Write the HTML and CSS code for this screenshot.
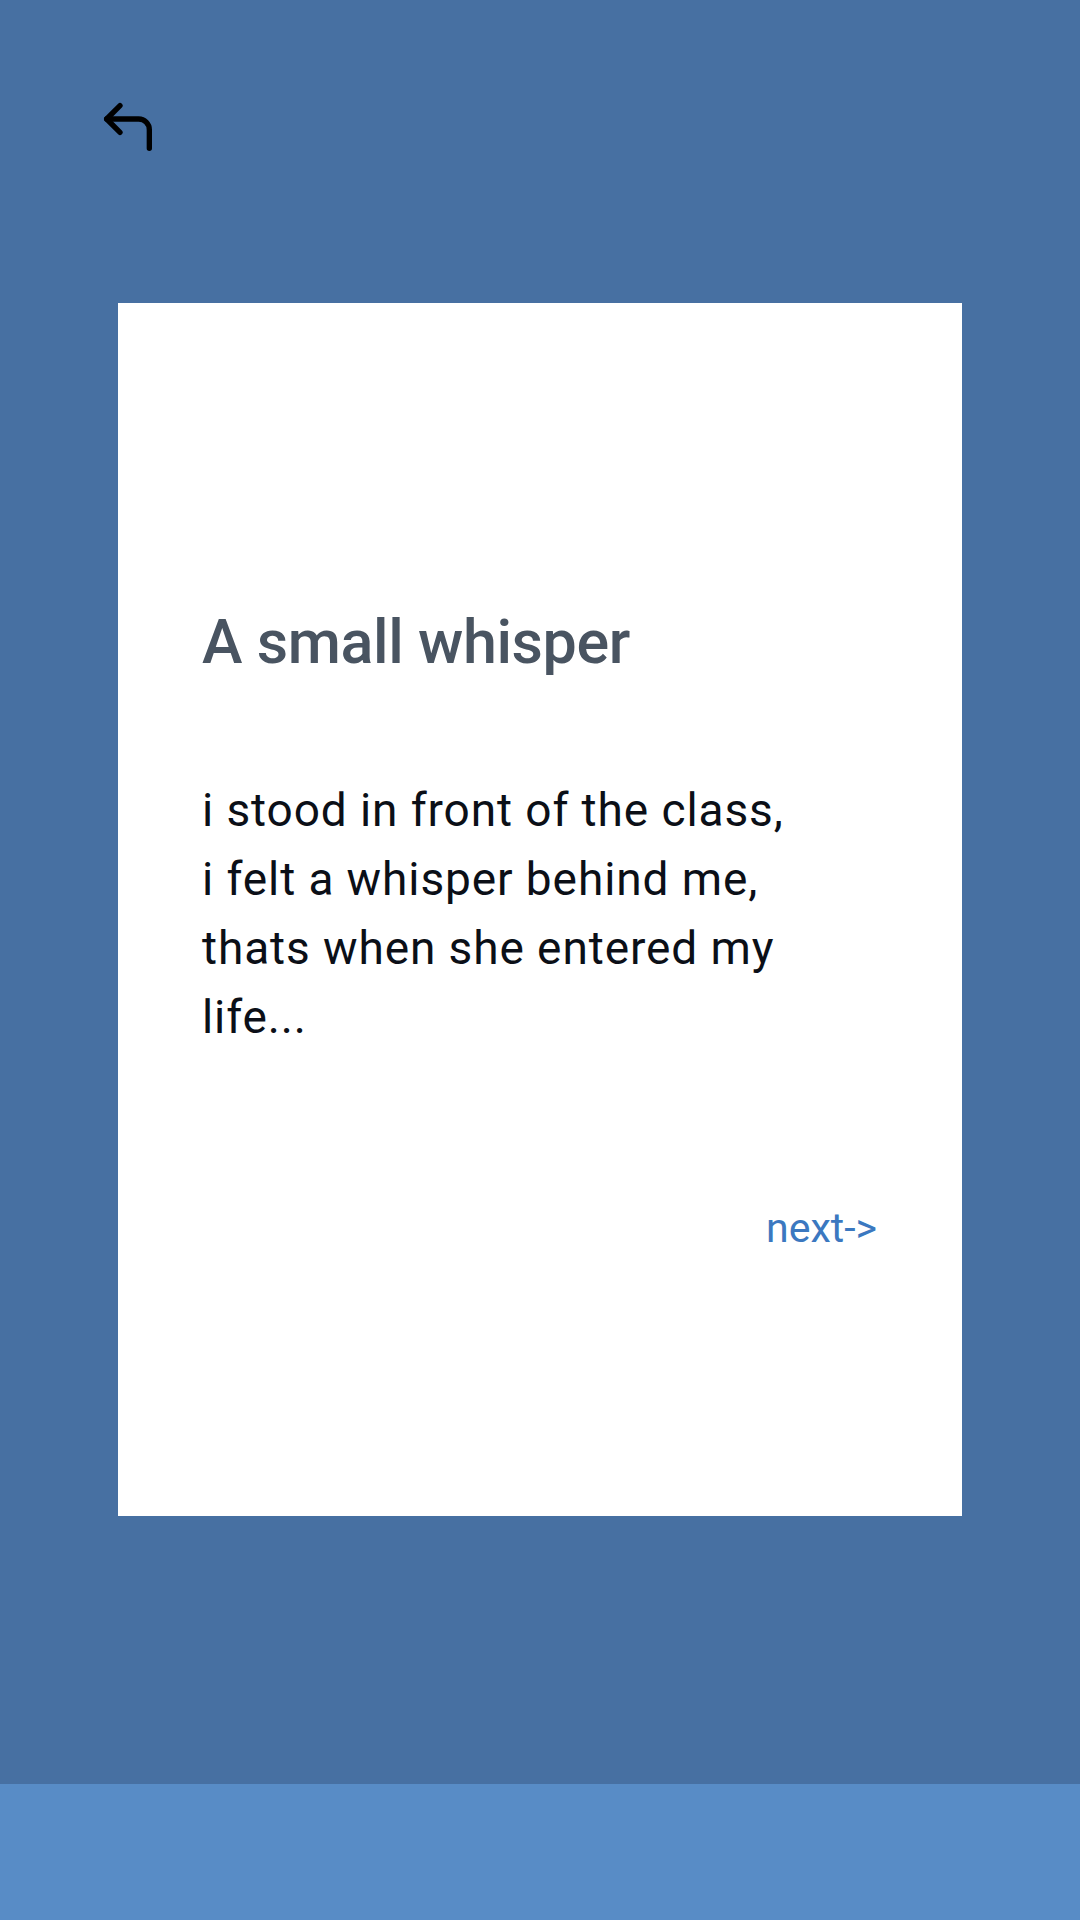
FILE: index.html
```html
<!DOCTYPE html>
<html>
<head>
<meta charset="utf-8">
<link rel="stylesheet" href="styles.css">
</head>
<body>
<div class="page">
  <header class="topbar">
    <svg class="back" viewBox="0 0 24 24" fill="none" stroke="#000" stroke-width="2" stroke-linecap="round" stroke-linejoin="round">
      <polyline points="9 14 4 9 9 4"></polyline>
      <path d="M20 20v-7a4 4 0 0 0-4-4H4"></path>
    </svg>
  </header>
  <main class="card">
    <h1 class="title">A small whisper</h1>
    <p class="story">i stood in front of the class,<br>i felt a whisper behind me, thats when she entered my life...</p>
    <div class="actions"><span class="next">next-&gt;</span></div>
  </main>
  <div class="spacer"></div>
  <footer class="bottombar"></footer>
</div>
</body>
</html>
```
FILE: styles.css
```css
html, body {
  margin: 0;
  padding: 0;
}
body {
  font-family: Roboto, "Liberation Sans", sans-serif;
  background: #4770a2;
}
.page {
  width: 1080px;
  height: 1920px;
  display: flex;
  flex-direction: column;
}
.topbar {
  height: 303px;
  padding: 95px 0 0 96px;
  box-sizing: border-box;
}
.back {
  width: 64px;
  height: 64px;
  display: block;
}
.card {
  margin: 0 118px;
  height: 1213px;
  box-sizing: border-box;
  background: #ffffff;
  padding: 302px 85px 0 84px;
  display: flex;
  flex-direction: column;
}
.title {
  margin: 0;
  font-size: 61px;
  line-height: 74px;
  font-weight: 500;
  letter-spacing: -0.4px;
  color: #495461;
}
.story {
  margin: 97px 0 0 0;
  max-width: 620px;
  font-size: 46px;
  line-height: 69px;
  letter-spacing: 0.9px;
  color: #0b0f17;
}
.actions {
  margin-top: 152px;
  display: flex;
  justify-content: flex-end;
}
.next {
  font-size: 41px;
  line-height: 48px;
  color: #3b78c0;
}
.spacer {
  flex: 1;
}
.bottombar {
  height: 136px;
  background: #588cc6;
}
```
